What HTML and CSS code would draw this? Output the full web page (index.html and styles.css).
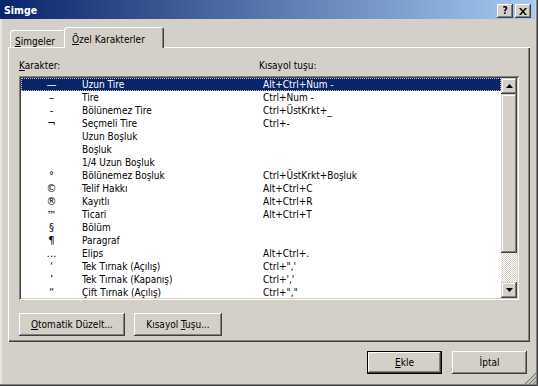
FILE: index.html
```html
<!DOCTYPE html>
<html lang="tr">
<head>
    <meta charset="UTF-8">
    <title>Simge</title>
    <link rel="stylesheet" href="styles.css">
</head>
<body>
<div class="window">
    <div class="titlebar">
        <span class="title">Simge</span>
        <div class="caption-btns">
            <span class="cbtn help">?</span>
            <span class="cbtn">
                <svg width="8" height="7" viewBox="0 0 8 7"><path d="M0 0h2l2 2.5L6 0h2L5 3.5 8 7H6L4 4.5 2 7H0l3-3.5z" fill="#000"/></svg>
            </span>
        </div>
    </div>

    <div class="content">
        <div class="tabs">
            <div class="tab"><u>S</u>imgeler</div>
            <div class="tab active"><u>Ö</u>zel Karakterler</div>
        </div>

        <div class="panel">
            <div class="list-head">
                <span><u>K</u>arakter:</span>
                <span>Kısayol tuşu:</span>
            </div>

            <div class="listbox">
                <div class="rows">
                    <div class="row selected"><span class="sym">—</span><span>Uzun Tire</span><span>Alt+Ctrl+Num -</span></div>
                    <div class="row"><span class="sym">–</span><span>Tire</span><span>Ctrl+Num -</span></div>
                    <div class="row"><span class="sym">-</span><span>Bölünemez Tire</span><span>Ctrl+ÜstKrkt+_</span></div>
                    <div class="row"><span class="sym">¬</span><span>Seçmeli Tire</span><span>Ctrl+-</span></div>
                    <div class="row"><span class="sym"></span><span>Uzun Boşluk</span><span></span></div>
                    <div class="row"><span class="sym"></span><span>Boşluk</span><span></span></div>
                    <div class="row"><span class="sym"></span><span>1/4 Uzun Boşluk</span><span></span></div>
                    <div class="row"><span class="sym">°</span><span>Bölünemez Boşluk</span><span>Ctrl+ÜstKrkt+Boşluk</span></div>
                    <div class="row"><span class="sym">©</span><span>Telif Hakkı</span><span>Alt+Ctrl+C</span></div>
                    <div class="row"><span class="sym">®</span><span>Kayıtlı</span><span>Alt+Ctrl+R</span></div>
                    <div class="row"><span class="sym">™</span><span>Ticari</span><span>Alt+Ctrl+T</span></div>
                    <div class="row"><span class="sym">§</span><span>Bölüm</span><span></span></div>
                    <div class="row"><span class="sym">¶</span><span>Paragraf</span><span></span></div>
                    <div class="row"><span class="sym">…</span><span>Elips</span><span>Alt+Ctrl+.</span></div>
                    <div class="row"><span class="sym">‘</span><span>Tek Tırnak (Açılış)</span><span>Ctrl+",'</span></div>
                    <div class="row"><span class="sym">’</span><span>Tek Tırnak (Kapanış)</span><span>Ctrl+','</span></div>
                    <div class="row"><span class="sym">“</span><span>Çift Tırnak (Açılış)</span><span>Ctrl+","</span></div>
                </div>
                <div class="scrollbar">
                    <div class="sb-btn">
                        <svg width="7" height="4" viewBox="0 0 7 4"><path d="M3.5 0L7 4H0z" fill="#000"/></svg>
                    </div>
                    <div class="sb-thumb"></div>
                    <div class="sb-track"></div>
                    <div class="sb-btn">
                        <svg width="7" height="4" viewBox="0 0 7 4"><path d="M0 0h7L3.5 4z" fill="#000"/></svg>
                    </div>
                </div>
            </div>

            <div class="panel-buttons">
                <div class="btn btn-wide"><span><u>O</u>tomatik Düzelt...</span></div>
                <div class="btn btn-mid"><span>Kısayol <u>T</u>uşu...</span></div>
            </div>
        </div>

        <div class="dialog-buttons">
            <div class="btn btn-default"><span><u>E</u>kle</span></div>
            <div class="btn"><span>İptal</span></div>
        </div>
    </div>

    <svg class="grip" width="12" height="12" viewBox="0 0 12 12">
        <path d="M11 1L1 11M11 5L5 11M11 9L9 11" stroke="#fff" stroke-width="1"/>
        <path d="M12 1L1 12M12 5L5 12M12 9L9 12" stroke="#808080" stroke-width="1.4"/>
    </svg>
</div>
</body>
</html>
```

FILE: styles.css
```css
body {
    margin: 0;
    background: #d4d0c8;
    font-family: "DejaVu Sans Condensed", "DejaVu Sans", sans-serif;
    font-stretch: condensed;
    font-size: 10px;
    color: #000;
}
u {
    text-underline-offset: 1px;
}
.window {
    position: relative;
    width: 538px;
    height: 386px;
    box-sizing: border-box;
    background: #d4d0c8;
    box-shadow: inset -1px -1px #404040, inset -2px -2px #808080, inset 2px 0 #e8e6e2;
    overflow: hidden;
}

/* title bar */
.titlebar {
    height: 19px;
    margin-right: 3px;
    padding: 0 4px 0 4px;
    display: flex;
    align-items: center;
    justify-content: space-between;
    background: linear-gradient(to right, #0a246a, #a6caf0);
}
.title {
    color: #fff;
    font-weight: bold;
    font-size: 10.5px;
}
.caption-btns {
    display: flex;
    gap: 2px;
    margin-top: 3px;
}
.cbtn {
    width: 16px;
    height: 14px;
    box-sizing: border-box;
    display: flex;
    align-items: center;
    justify-content: center;
    background: #d4d0c8;
    box-shadow: inset -1px -1px #404040, inset 1px 1px #fff, inset -2px -2px #808080;
}
.help {
    font-family: "DejaVu Sans", sans-serif;
    font-weight: bold;
    font-size: 10px;
    line-height: 14px;
}

.content {
    padding: 8px 8px 0 8px;
}

/* tabs */
.tabs {
    height: 20px;
    padding-left: 2px;
    display: flex;
    align-items: flex-end;
}
.tab {
    box-sizing: border-box;
    height: 17px;
    width: 56px;
    padding: 5px 0 0 5px;
    line-height: 13px;
    background: #d4d0c8;
    border-radius: 3px 3px 0 0;
    box-shadow: inset 1px 1px #fff, inset -1px 0 #404040, inset -2px 0 #808080;
}
.tab.active {
    position: relative;
    z-index: 1;
    width: 100px;
    height: 21px;
    margin: 0 0 -1px -2px;
    padding: 6px 0 0 8px;
}

/* panel */
.panel {
    padding: 12px 11px 6px 11px;
    box-shadow: inset 1px 1px #fff, inset -1px -1px #404040, inset -2px -2px #808080;
}
.list-head {
    display: grid;
    grid-template-columns: 240px 1fr;
    height: 13px;
    line-height: 13px;
    margin-bottom: 4px;
}
.listbox {
    display: flex;
    height: 224px;
    padding: 2px;
    box-sizing: border-box;
    background: #fff;
    box-shadow: inset 1px 1px #808080, inset -1px -1px #fff, inset 2px 2px #404040, inset -2px -2px #d4d0c8;
}
.rows {
    flex: 1;
    overflow: hidden;
}
.row {
    display: grid;
    grid-template-columns: 61px 181px 1fr;
    height: 13px;
    line-height: 13px;
    white-space: nowrap;
}
.row .sym {
    text-align: center;
    font-family: "DejaVu Sans", sans-serif;
    font-stretch: normal;
}
.row.selected {
    background: #0a246a;
    color: #fff;
    outline: 1px dotted #c9c4b4;
    outline-offset: -1px;
}

/* scrollbar */
.scrollbar {
    width: 16px;
    display: flex;
    flex-direction: column;
}
.sb-btn,
.sb-thumb {
    background: #d4d0c8;
    box-shadow: inset -1px -1px #404040, inset 1px 1px #d4d0c8, inset -2px -2px #808080, inset 2px 2px #fff;
}
.sb-btn {
    height: 16px;
    display: flex;
    align-items: center;
    justify-content: center;
}
.sb-thumb {
    height: 159px;
}
.sb-track {
    flex: 1;
    background: repeating-conic-gradient(#fff 0 25%, #d4d0c8 0 50%) 0 0 / 2px 2px;
}

/* buttons */
.panel-buttons {
    display: flex;
    gap: 9px;
    margin-top: 13px;
}
.btn {
    box-sizing: border-box;
    width: 75px;
    height: 23px;
    display: flex;
    align-items: center;
    justify-content: center;
    white-space: nowrap;
    background: #d4d0c8;
    box-shadow: inset -1px -1px #404040, inset 1px 1px #fff, inset -2px -2px #808080, inset 2px 2px #d4d0c8;
}
.btn-wide {
    width: 106px;
}
.btn-mid {
    width: 88px;
}
.btn-default {
    box-shadow: inset 0 0 0 1px #000, inset -2px -2px #404040, inset 2px 2px #fff, inset -3px -3px #808080;
}
.dialog-buttons {
    display: flex;
    justify-content: flex-end;
    gap: 10px;
    margin-top: 9px;
    padding-right: 3px;
}

.grip {
    position: absolute;
    right: 2px;
    bottom: 2px;
}
```
